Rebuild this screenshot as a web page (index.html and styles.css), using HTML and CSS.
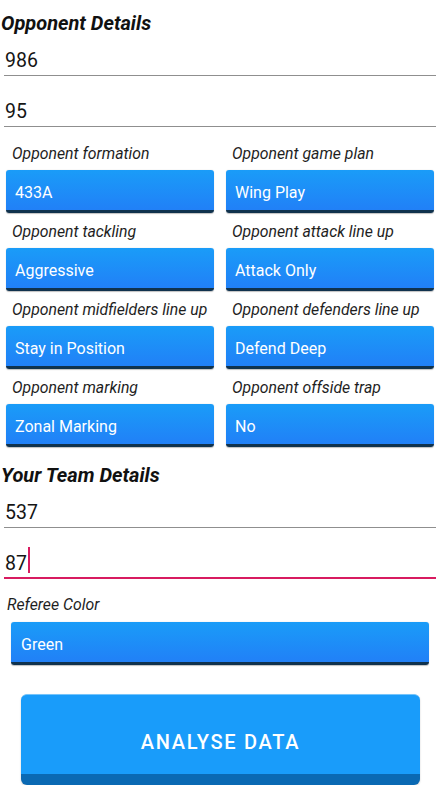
FILE: index.html
```html
<!DOCTYPE html>
<html>
<head>
<meta charset="utf-8">
<link rel="stylesheet" href="styles.css">
</head>
<body>
<div class="page">
  <h2 class="heading">Opponent Details</h2>
  <div class="field first">986</div>
  <div class="field">95</div>

  <div class="grid">
    <div class="cell"><div class="label">Opponent formation</div><div class="select">433A</div></div>
    <div class="cell"><div class="label">Opponent game plan</div><div class="select">Wing Play</div></div>
    <div class="cell"><div class="label">Opponent tackling</div><div class="select">Aggressive</div></div>
    <div class="cell"><div class="label">Opponent attack line up</div><div class="select">Attack Only</div></div>
    <div class="cell"><div class="label">Opponent midfielders line up</div><div class="select">Stay in Position</div></div>
    <div class="cell"><div class="label">Opponent defenders line up</div><div class="select">Defend Deep</div></div>
    <div class="cell"><div class="label">Opponent marking</div><div class="select">Zonal Marking</div></div>
    <div class="cell"><div class="label">Opponent offside trap</div><div class="select">No</div></div>
  </div>

  <h2 class="heading second">Your Team Details</h2>
  <div class="field first">537</div>
  <div class="field focused">87<span class="cursor"></span></div>

  <div class="label referee-label">Referee Color</div>
  <div class="select referee">Green</div>

  <button class="analyse">ANALYSE DATA</button>
</div>
</body>
</html>
```
FILE: styles.css
```css
* { box-sizing: border-box; }
html, body { margin: 0; padding: 0; background: #fff; }
body { font-family: Roboto, "Noto Sans", sans-serif; color: #111; width: 441px; }
.page { display: flex; flex-direction: column; }

.heading {
  margin: 8px 0 0 1px;
  padding-top: 2px;
  font-size: 20px;
  font-weight: 700;
  font-style: italic;
  line-height: 26px;
  height: 28px;
  color: #111;
}
.heading.second { margin-top: 13px; }

.field {
  margin: 11px 5px 0 4px;
  padding: 14px 0 0 1px;
  height: 40px;
  font-size: 19.5px;
  line-height: 22px;
  color: #151515;
  border-bottom: 1px solid #8f8f8f;
  display: flex;
  align-items: flex-start;
}
.field.first { margin-top: 0; }
.field.focused { border-bottom: 2px solid #d81b60; }
.cursor {
  display: inline-block;
  width: 2px;
  height: 26px;
  margin-top: -6px;
  margin-left: 1px;
  background: #d81b60;
}

.grid {
  display: grid;
  grid-template-columns: 208px 208px;
  column-gap: 12px;
  row-gap: 9px;
  padding: 17px 0 0 6px;
}
.cell { display: flex; flex-direction: column; gap: 6px; }

.label {
  font-size: 15.8px;
  font-style: italic;
  line-height: 20px;
  height: 20px;
  color: #1e1e1e;
  padding-left: 6px;
  white-space: nowrap;
}

.select {
  height: 43px;
  border-radius: 3px;
  background: linear-gradient(#1a9cf8, #2180f7);
  border-bottom: 3px solid #10324d;
  color: #fff;
  font-size: 16px;
  line-height: 40px;
  padding: 3px 0 0 9px;
  box-shadow: 0 0.5px 1px rgba(0,0,0,0.25);
}

.referee-label { margin-top: 16px; padding-left: 7px; }
.select.referee {
  margin: 7px 12px 0 11px;
  padding-left: 10px;
}

.analyse {
  margin: 29px 21px 0 21px;
  width: 399px;
  height: 91px;
  border: none;
  border-top: 1.5px solid #75c4fa;
  border-bottom: 11px solid #0a69b3;
  border-radius: 6px;
  background: #199cfa;
  color: #fff;
  font-family: Roboto, sans-serif;
  font-weight: 500;
  font-size: 20px;
  letter-spacing: 1.7px;
  padding: 14px 0 0 0;
  box-shadow: 0 1px 2px rgba(0,0,0,0.2);
}
```
